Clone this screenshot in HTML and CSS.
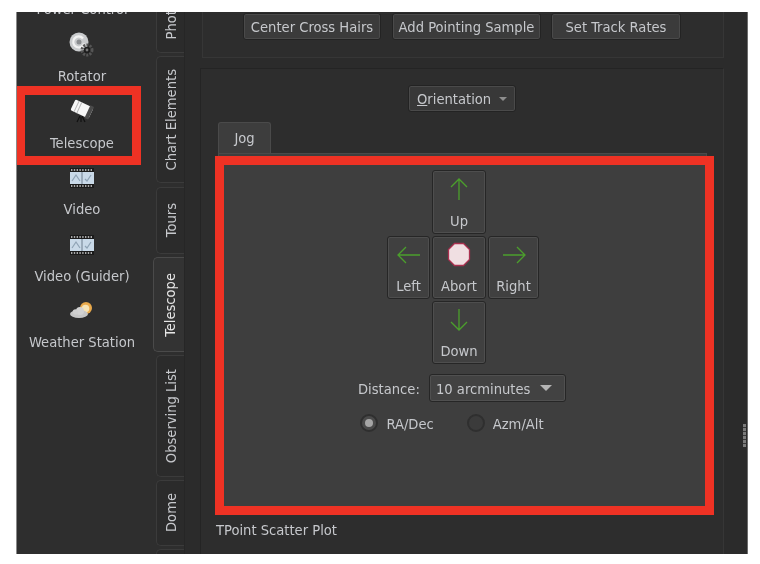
FILE: index.html
```html
<!DOCTYPE html>
<html lang="en">
<head>
<meta charset="utf-8">
<title>Telescope</title>
<link rel="stylesheet" href="styles.css">
</head>
<body>
<div class="app">
  <aside class="sidebar">
    <div class="device device-first">
      <span class="device-label">Power Control</span>
    </div>
    <div class="device">
      <svg class="device-icon" viewBox="0 0 28 28"><circle cx="11" cy="11" r="9.5" fill="#c9cbcd"/><path d="M15 7.5a5.5 5.5 0 1 0 1 5" fill="none" stroke="#f2f2f2" stroke-width="2.2"/><circle cx="11" cy="11" r="2.5" fill="#8b8d90"/><circle cx="19" cy="19" r="5" fill="none" stroke="#555" stroke-width="3" stroke-dasharray="2 1.2"/><circle cx="19" cy="19" r="3.2" fill="#1d1d1d"/><circle cx="19" cy="19" r="1.4" fill="#777"/></svg>
      <span class="device-label">Rotator</span>
    </div>
    <div class="device">
      <svg class="device-icon" viewBox="0 0 28 28"><path d="M12 18l-3 6M13 19v5M14 18l3 6" stroke="#111" stroke-width="1.2"/><g transform="rotate(25 14 11)"><rect x="4" y="5" width="20" height="12" rx="1.5" fill="#f7f7f7"/><path d="M8 5v12M11 5v12" stroke="#b8b8b8"/><rect x="20" y="4" width="4" height="14" fill="#4a4a4a"/></g></svg>
      <span class="device-label">Telescope</span>
    </div>
    <div class="device">
      <svg class="device-icon" viewBox="0 0 28 28"><use href="#film"/></svg>
      <span class="device-label">Video</span>
    </div>
    <div class="device">
      <svg class="device-icon" viewBox="0 0 28 28"><defs><g id="film"><rect x="2" y="4" width="24" height="20" fill="#1a1a1a"/><rect x="2" y="8" width="24" height="12" fill="#c9d9e8"/><path d="M14 8v12" stroke="#6f7f8e"/><path d="M4 17l4-6 4 6M17 15l2 2 4-6" fill="none" stroke="#8fa3b5" stroke-width="1.2"/><path d="M3 6h22M3 22h22" stroke="#d8d8d8" stroke-width="1.4" stroke-dasharray="1.4 1.4"/></g></defs><use href="#film"/></svg>
      <span class="device-label">Video (Guider)</span>
    </div>
    <div class="device">
      <svg class="device-icon" viewBox="0 0 28 28"><circle cx="18" cy="11" r="6" fill="#e9a94b"/><circle cx="17.5" cy="11.5" r="3.8" fill="#f6e3b5"/><ellipse cx="11" cy="17" rx="9" ry="4" fill="#c6c6c6"/><circle cx="12" cy="14" r="4" fill="#d2d2d2"/><circle cx="7.500" cy="15" r="2.800" fill="#cfcfcf"/></svg>
      <span class="device-label">Weather Station</span>
    </div>
  </aside>

  <nav class="tabs">
    <div class="tab tab-photo"><span class="tab-text">Photo</span></div>
    <div class="tab tab-chart"><span class="tab-text">Chart Elements</span></div>
    <div class="tab tab-tours"><span class="tab-text">Tours</span></div>
    <div class="tab tab-scope"><span class="tab-text">Telescope</span></div>
    <div class="tab tab-list"><span class="tab-text">Observing List</span></div>
    <div class="tab tab-dome"><span class="tab-text">Dome</span></div>
    <div class="tab tab-more"></div>
  </nav>

  <main class="main">
    <section class="group-top">
      <button class="btn btn-center">Center Cross Hairs</button>
      <button class="btn btn-sample">Add Pointing Sample</button>
      <button class="btn btn-rates">Set Track Rates</button>
    </section>

    <section class="group-mount">
      <div class="orient-row">
        <button class="btn btn-orient"><span><u>O</u>rientation</span><i class="caret caret-small"></i></button>
      </div>
      <div class="jog-tab">Jog</div>
      <div class="jog-pane">
        <div class="dpad">
          <button class="pad pad-up">
            <svg class="pad-icon" viewBox="0 0 26 26"><path d="M13 24V3M5 11l8-8 8 8" fill="none" stroke="#4b9f2c" stroke-width="1.3"/></svg>
            <span>Up</span>
          </button>
          <button class="pad pad-left">
            <svg class="pad-icon" viewBox="0 0 26 26"><path d="M24 13H2M10 5l-8 8 8 8" fill="none" stroke="#4b9f2c" stroke-width="1.3"/></svg>
            <span>Left</span>
          </button>
          <button class="pad pad-abort">
            <svg class="pad-icon" viewBox="0 0 26 26"><path d="M8.500 1.500h9l6 6v10l-6 6h-9l-6-6v-10z" fill="#f0dfe2" stroke="#a9304f" stroke-width="1.300"/></svg>
            <span>Abort</span>
          </button>
          <button class="pad pad-right">
            <svg class="pad-icon" viewBox="0 0 26 26"><path d="M2 13h22M16 5l8 8-8 8" fill="none" stroke="#4b9f2c" stroke-width="1.3"/></svg>
            <span>Right</span>
          </button>
          <button class="pad pad-down">
            <svg class="pad-icon" viewBox="0 0 26 26"><path d="M13 2v21M5 15l8 8 8-8" fill="none" stroke="#4b9f2c" stroke-width="1.3"/></svg>
            <span>Down</span>
          </button>
        </div>
        <div class="distance-row">
          <label class="distance-label">Distance:</label>
          <div class="combo"><span>10 arcminutes</span><i class="caret"></i></div>
        </div>
        <div class="radio-row">
          <div class="radio-item radio-ra"><i class="radio radio-on"></i><span>RA/Dec</span></div>
          <div class="radio-item"><i class="radio"></i><span>Azm/Alt</span></div>
        </div>
      </div>
      <div class="scatter-title">TPoint Scatter Plot</div>
    </section>
  </main>

  <div class="grip"></div>

  <div class="mark mark-device"></div>
  <div class="mark mark-pane"></div>
</div>
</body>
</html>
```

FILE: styles.css
```css
* { box-sizing: border-box; }
html, body { margin: 0; padding: 0; background: #fff; }
body {
  width: 760px;
  height: 564px;
  overflow: hidden;
  padding: 12px 12px 0 16px;
  font-family: "DejaVu Sans", "Noto Sans", sans-serif;
  font-stretch: condensed;
  font-size: 14.6px;
  color: #c6c8cc;
}
button { font: inherit; color: inherit; }

.app {
  position: relative;
  width: 732px;
  height: 542px;
  display: flex;
  overflow: hidden;
  background: #2c2c2c;
  border-left: 1px solid #8a8a8a;
  border-right: 1px solid #6c6c6c;
  filter: blur(0.35px);
}

/* device list */
.sidebar {
  width: 134px;
  flex: none;
  background: #2e2e2e;
  margin-top: -44px;
  padding-right: 4px;
  display: flex;
  flex-direction: column;
  align-items: center;
}
.device {
  height: 66.500px;
  flex: none;
  display: flex;
  flex-direction: column;
  align-items: center;
}
.device-first { justify-content: flex-end; height: 62px; }
.device-first .device-label { margin-bottom: 11px; }
.device-icon {
  width: 28px;
  height: 28px;
  margin-top: 1px;
  margin-bottom: 7px;
}
.device-label { line-height: 20px; white-space: nowrap; }

/* vertical tabs */
.tabs {
  width: 33px;
  flex: none;
  background: #2e2e2e;
  margin-top: -24px;
  display: flex;
  flex-direction: column;
  align-items: flex-end;
}
.tab {
  width: 28px;
  flex: none;
  margin-bottom: 3px;
  background: #2b2b2b;
  border: 1px solid #3b3b3b;
  border-right: 0;
  border-radius: 5px 0 0 5px;
  display: flex;
  align-items: center;
  justify-content: center;
  overflow: hidden;
}
.tab-text {
  writing-mode: vertical-rl;
  transform: rotate(180deg);
  white-space: nowrap;
}
.tab-photo { height: 65px; align-items: flex-start; }
.tab-photo .tab-text { margin-top: 13px; }
.tab-chart { height: 127px; }
.tab-tours { height: 67px; margin-top: 1px; }
.tab-scope {
  width: 31px;
  height: 95px;
  background: #333;
  border-color: #4a4a4a;
  color: #e6e6e6;
}
.tab-list { height: 122px; }
.tab-dome { height: 66px; }
.tab-more { height: 30px; }

/* main area */
.main {
  flex: 1;
  min-width: 0;
  padding-left: 16px;
  background: #2b2b2b;
  border-left: 1px solid #262626;
}
.group-top {
  width: 522px;
  height: 50px;
  margin: -4px 0 0 1px;
  padding: 4px 0 0 40px;
  display: flex;
  align-items: flex-start;
  border: 1px solid #363636;
  background: #2d2d2d;
}
.btn {
  height: 27px;
  padding: 0;
  background: #3b3b3b;
  border: 1px solid #232323;
  box-shadow: inset 0 0 0 1px #4a4a4a;
  border-radius: 3px;
  text-align: center;
  flex: none;
}
.btn-center { width: 138px; margin-right: 11px; }
.btn-sample { width: 149px; margin-right: 10px; }
.btn-rates { width: 130px; }

.group-mount {
  position: relative;
  width: 524px;
  height: 500px;
  margin-top: 10px;
  margin-left: -1px;
  background: #2d2d2d;
  border-top: 1px solid #242424;
  border-left: 1px solid #242424;
  border-right: 1px solid #363636;
}
.orient-row {
  display: flex;
  justify-content: center;
  padding-top: 16px;
}
.btn-orient {
  width: 108px;
  height: 27px;
  display: flex;
  align-items: center;
  justify-content: space-between;
  padding: 0 8px;
  text-align: left;
  background: #383838;
}
.caret {
  display: block;
  width: 0;
  height: 0;
  border-left: 6px solid transparent;
  border-right: 6px solid transparent;
  border-top: 6px solid #b4b4b4;
}
.caret-small {
  border-left-width: 4px;
  border-right-width: 4px;
  border-top-width: 4px;
  border-top-color: #8e8e8e;
}
.jog-tab {
  width: 53px;
  height: 32px;
  margin: 10px 0 0 17px;
  padding-bottom: 2px;
  background: #3d3d3d;
  border: 1px solid #4a4a4a;
  border-bottom: 0;
  border-radius: 3px 3px 0 0;
  display: flex;
  align-items: center;
  justify-content: center;
}
.jog-pane {
  width: 489px;
  height: 355px;
  margin: -1px 0 0 17px;
  background: #3e3e3e;
  border: 1px solid #4a4a4a;
  padding-top: 16px;
  display: flex;
  flex-direction: column;
  align-items: center;
}

/* direction pad */
.dpad {
  display: grid;
  grid-template-columns: 43px 54px 51px;
  grid-template-rows: 64px 63px 63px;
  gap: 2px;
  margin-left: 1px;
}
.pad {
  padding: 5px 0 4px;
  background: #404040;
  border: 1px solid #262626;
  box-shadow: inset 0 0 0 1px #4e4e4e;
  border-radius: 3px;
  display: flex;
  flex-direction: column;
  align-items: center;
  justify-content: space-between;
}
.pad-icon { width: 26px; height: 26px; display: block; }
.pad-up { grid-column: 2; grid-row: 1; }
.pad-left { grid-column: 1; grid-row: 2; }
.pad-abort { grid-column: 2; grid-row: 2; }
.pad-right { grid-column: 3; grid-row: 2; }
.pad-down { grid-column: 2; grid-row: 3; }

.distance-row {
  display: flex;
  align-items: center;
  margin-top: 10px;
  margin-left: -1px;
}
.distance-label { width: 71px; }
.combo {
  width: 137px;
  height: 28px;
  padding: 0 13px 0 6px;
  display: flex;
  align-items: center;
  justify-content: space-between;
  background: #424242;
  border: 1px solid #262626;
  box-shadow: inset 0 0 0 1px #505050;
  border-radius: 3px;
}
.radio-row {
  display: flex;
  align-items: center;
  margin-top: 12px;
  margin-left: -21px;
}
.radio-item { display: flex; align-items: center; gap: 8px; }
.radio-ra { margin-right: 33px; }
.radio {
  width: 18px;
  height: 18px;
  border-radius: 50%;
  background: #3b3b3b;
  border: 2px solid #2f2f2f;
  display: flex;
  align-items: center;
  justify-content: center;
}
.radio-on { background: #4a4a4a; }
.radio-on::after {
  content: "";
  width: 8px;
  height: 8px;
  border-radius: 50%;
  background: #a6a6a6;
}
.scatter-title {
  margin: 12px 0 0 15px;
  line-height: 20px;
}

/* splitter grip */
.grip {
  position: absolute;
  right: 1px;
  top: 412px;
  width: 3px;
  height: 23px;
  background: repeating-linear-gradient(to bottom, #7c7c7c 0 3px, #3a3a3a 3px 4px);
}

/* red annotation frames */
.mark {
  position: absolute;
  border: 9px solid #ee3224;
  pointer-events: none;
}
.mark-device { left: -1px; top: 74px; width: 125px; height: 79px; }
.mark-pane { left: 198px; top: 144px; width: 499px; height: 359px; }
```
